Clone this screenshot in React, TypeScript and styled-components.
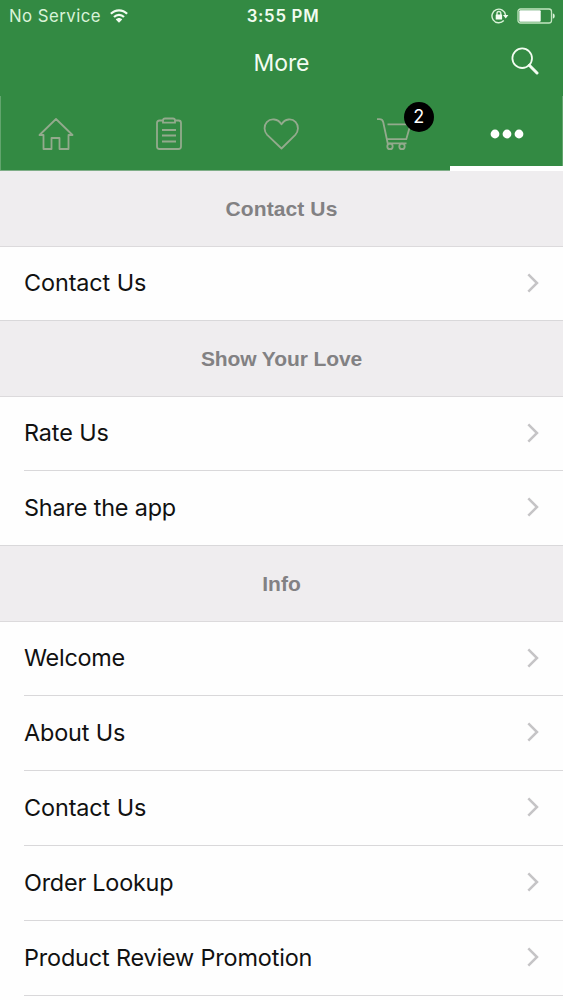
import React from 'react';
import styled, { createGlobalStyle } from 'styled-components';

const GlobalStyle = createGlobalStyle`
  * { box-sizing: border-box; }
  body { margin: 0; background: #fefefe; font-family: Inter, "Liberation Sans", sans-serif; }
`;

const Screen = styled.main`
  width: 563px;
  height: 1000px;
  overflow: hidden;
  background: #fefefe;
`;

const Header = styled.header`
  height: 171px;
  background: #338a43;
  color: #f2fcf1;
`;

const StatusBar = styled.div`
  height: 31px;
  display: grid;
  grid-template-columns: 1fr auto 1fr;
  align-items: center;
  padding: 0 8px 0 9px;
`;

const Carrier = styled.div`
  display: flex;
  align-items: center;
  gap: 9px;
  font-size: 16.8px;
  letter-spacing: 0.45px;
  color: #d9f3d8;
`;

const Clock = styled.div`
  font-size: 16.8px;
  font-weight: 600;
  letter-spacing: 0.72px;
  padding-left: 2px;
`;

const Indicators = styled.div`
  display: flex;
  align-items: center;
  justify-content: flex-end;
  gap: 8px;
`;

const NavBar = styled.div`
  height: 65px;
  display: grid;
  grid-template-columns: 1fr auto 1fr;
  align-items: center;
  padding: 0 24px 4px;
`;

const Title = styled.h1`
  grid-column: 2;
  margin: 2px 0 0;
  font-size: 23px;
  font-weight: 400;
  letter-spacing: -0.1px;
`;

const SearchButton = styled.button`
  justify-self: end;
  display: flex;
  margin-top: -2px;
  padding: 0;
  border: 0;
  background: none;
  color: inherit;
`;

const TabBar = styled.nav`
  height: 75px;
  display: grid;
  grid-template-columns: repeat(5, 1fr);
  box-shadow: inset 1px 0 #62a56d, inset -1px 0 #62a56d;
`;

const Tab = styled.div<{ $active?: boolean }>`
  position: relative;
  display: flex;
  align-items: center;
  justify-content: center;
  padding-top: ${p => (p.$active ? 5 : 2)}px;
  color: ${p => (p.$active ? '#fff' : '#93aa8d')};
  border-bottom: ${p => (p.$active ? '5px solid #fff' : '1px solid #7fae88')};
`;

const Badge = styled.span`
  position: absolute;
  left: 66px;
  top: 6px;
  width: 30px;
  height: 30px;
  border-radius: 50%;
  background: #000;
  color: #fff;
  font-size: 18px;
  line-height: 30px;
  text-align: center;
`;

const SectionTitle = styled.h2<{ $spacing: number }>`
  height: 76px;
  margin: 0;
  display: flex;
  align-items: center;
  justify-content: center;
  background: #efedef;
  border-bottom: 1px solid #dcdadc;
  color: #828183;
  font: bold 21px "Liberation Sans", sans-serif;
  letter-spacing: ${p => p.$spacing}px;
`;

const Section = styled.section`
  &:not(:last-child) li:last-child { padding-left: 0; }
  &:not(:last-child) li:last-child > div { padding-left: 24px; }
`;

const List = styled.ul`
  margin: 0;
  padding: 0;
  list-style: none;
`;

const Row = styled.li`
  height: 75px;
  padding-left: 24px;
  &:first-child { height: 74px; }
`;

const RowBody = styled.div`
  height: 100%;
  display: flex;
  align-items: center;
  justify-content: space-between;
  padding: 0 24px 2px 0;
  border-bottom: 1px solid #d9d8da;
  color: #111;
`;

const Label = styled.span<{ $spacing: number }>`
  font-size: 23.4px;
  letter-spacing: ${p => p.$spacing}px;
`;

const sections = [
  { title: 'Contact Us', spacing: 0.1, rows: [['Contact Us', -0.1]] },
  { title: 'Show Your Love', spacing: -0.1, rows: [['Rate Us', -0.1], ['Share the app', -0.16]] },
  {
    title: 'Info',
    spacing: 0,
    rows: [['Welcome', -0.25], ['About Us', -0.15], ['Contact Us', -0.1], ['Order Lookup', -0.22], ['Product Review Promotion', -0.15]],
  },
] as { title: string; spacing: number; rows: [string, number][] }[];

const WifiIcon = () => (
  <svg width="18" height="14" viewBox="0 0 18 14" fill="none" stroke="#f2fcf1" strokeWidth="2.2">
    <path d="M.9 4.8C5.4.1 12.6.1 17.1 4.8M4 8.1C6.8 5.2 11.2 5.2 14 8.1" />
    <path d="M5.8 10.5C7.6 8.5 10.4 8.5 12.2 10.5L9 13.8Z" fill="#f2fcf1" stroke="none" />
  </svg>
);

const RotationLockIcon = () => (
  <svg width="18" height="16" viewBox="0 0 18 16" fill="none" stroke="#d9f3d8" strokeWidth="1.4">
    <path d="M12.8 12.5A6.8 6.8 0 1 1 14.5 7" />
    <path d="M12 7H17.4L14.7 10.5Z" fill="#f2fcf1" stroke="none" />
    <path d="M6 7V5.4a1.9 1.9 0 0 1 3.8 0V7" />
    <rect x="4.7" y="6.6" width="6.4" height="4.8" rx=".5" fill="#f2fcf1" stroke="none" />
  </svg>
);

const BatteryIcon = () => (
  <svg width="38" height="16" viewBox="0 0 38 16">
    <rect x="1" y="1" width="33.5" height="14" rx="2.5" fill="none" stroke="#c3e6c1" strokeWidth="1.3" />
    <rect x="2.3" y="2.3" width="21.4" height="11.4" rx="1" fill="#fff" />
    <path d="M35.8 5.2Q37.8 6 37.8 8T35.8 10.8Z" fill="#d9f3d8" />
  </svg>
);

const SearchIcon = () => (
  <svg width="28" height="28" viewBox="0 0 28 28" fill="none" stroke="currentColor">
    <circle cx="11.2" cy="11.2" r="9.8" strokeWidth="1.8" />
    <path d="M18.3 18.3L26 26" strokeWidth="3" strokeLinecap="round" />
  </svg>
);

const HomeIcon = () => (
  <svg width="36" height="34" viewBox="0 0 36 34" fill="none" stroke="currentColor" strokeWidth="1.8" strokeLinejoin="round">
    <path d="M18 2L1.5 18H5.5V32H13.5V21H21.5V32H30.5V18H34.5Z" />
  </svg>
);

const ClipboardIcon = () => (
  <svg width="28" height="34" viewBox="0 0 28 34" fill="none" stroke="currentColor" strokeWidth="1.8">
    <path d="M8 3.5H4.5Q2 3.5 2 6V29.5Q2 32 4.5 32H23.5Q26 32 26 29.5V6Q26 3.5 23.5 3.5H20" />
    <path d="M8 5.7V3.5Q8 1.5 10 1.5H18Q20 1.5 20 3.5V5.7Z" />
    <path d="M7 13H21M7 18.5H21M7 24.5H21" />
  </svg>
);

const HeartIcon = () => (
  <svg width="36" height="32" viewBox="0 0 36 32" fill="none" stroke="currentColor" strokeWidth="1.8" strokeLinejoin="round">
    <path d="M18.5 6.4C15 .4 7.5.1 3.8 4.2C.6 7.8.9 13.3 4.2 16.8L18.5 30.5L32.3 16.8C35.6 13.3 35.9 7.8 32.7 4.2C29 .1 22 .4 18.5 6.4Z" />
  </svg>
);

const CartIcon = () => (
  <svg width="36" height="34" viewBox="0 0 36 34" fill="none" stroke="currentColor" strokeWidth="1.8">
    <path d="M1 2.2H3.5Q6.4 2.2 7.2 5L11.7 26.3H30.5M11 22.2H30.3L34.5 7.3H11.5" />
    <circle cx="14" cy="29.4" r="2.7" />
    <circle cx="26" cy="29.4" r="2.7" />
  </svg>
);

const MoreIcon = () => (
  <svg width="34" height="10" viewBox="0 0 34 10" fill="currentColor">
    <circle cx="5" cy="5" r="4.4" />
    <circle cx="17" cy="5" r="4.4" />
    <circle cx="29" cy="5" r="4.4" />
  </svg>
);

const Chevron = () => (
  <svg width="12" height="20" viewBox="0 0 12 20" fill="none" stroke="#c5c4c6" strokeWidth="2.5">
    <path d="M1.3 1.3L10 10L1.3 18.7" />
  </svg>
);

export default function App() {
  return (
    <Screen>
      <GlobalStyle />
      <Header>
        <StatusBar>
          <Carrier>No Service<WifiIcon /></Carrier>
          <Clock>3:55 PM</Clock>
          <Indicators><RotationLockIcon /><BatteryIcon /></Indicators>
        </StatusBar>
        <NavBar>
          <Title>More</Title>
          <SearchButton aria-label="Search"><SearchIcon /></SearchButton>
        </NavBar>
        <TabBar>
          <Tab><HomeIcon /></Tab>
          <Tab><ClipboardIcon /></Tab>
          <Tab><HeartIcon /></Tab>
          <Tab><CartIcon /><Badge>2</Badge></Tab>
          <Tab $active><MoreIcon /></Tab>
        </TabBar>
      </Header>
      {sections.map(section => (
        <Section key={section.title}>
          <SectionTitle $spacing={section.spacing}>{section.title}</SectionTitle>
          <List>
            {section.rows.map(([label, spacing]) => (
              <Row key={label}>
                <RowBody>
                  <Label $spacing={spacing}>{label}</Label>
                  <Chevron />
                </RowBody>
              </Row>
            ))}
          </List>
        </Section>
      ))}
    </Screen>
  );
}
